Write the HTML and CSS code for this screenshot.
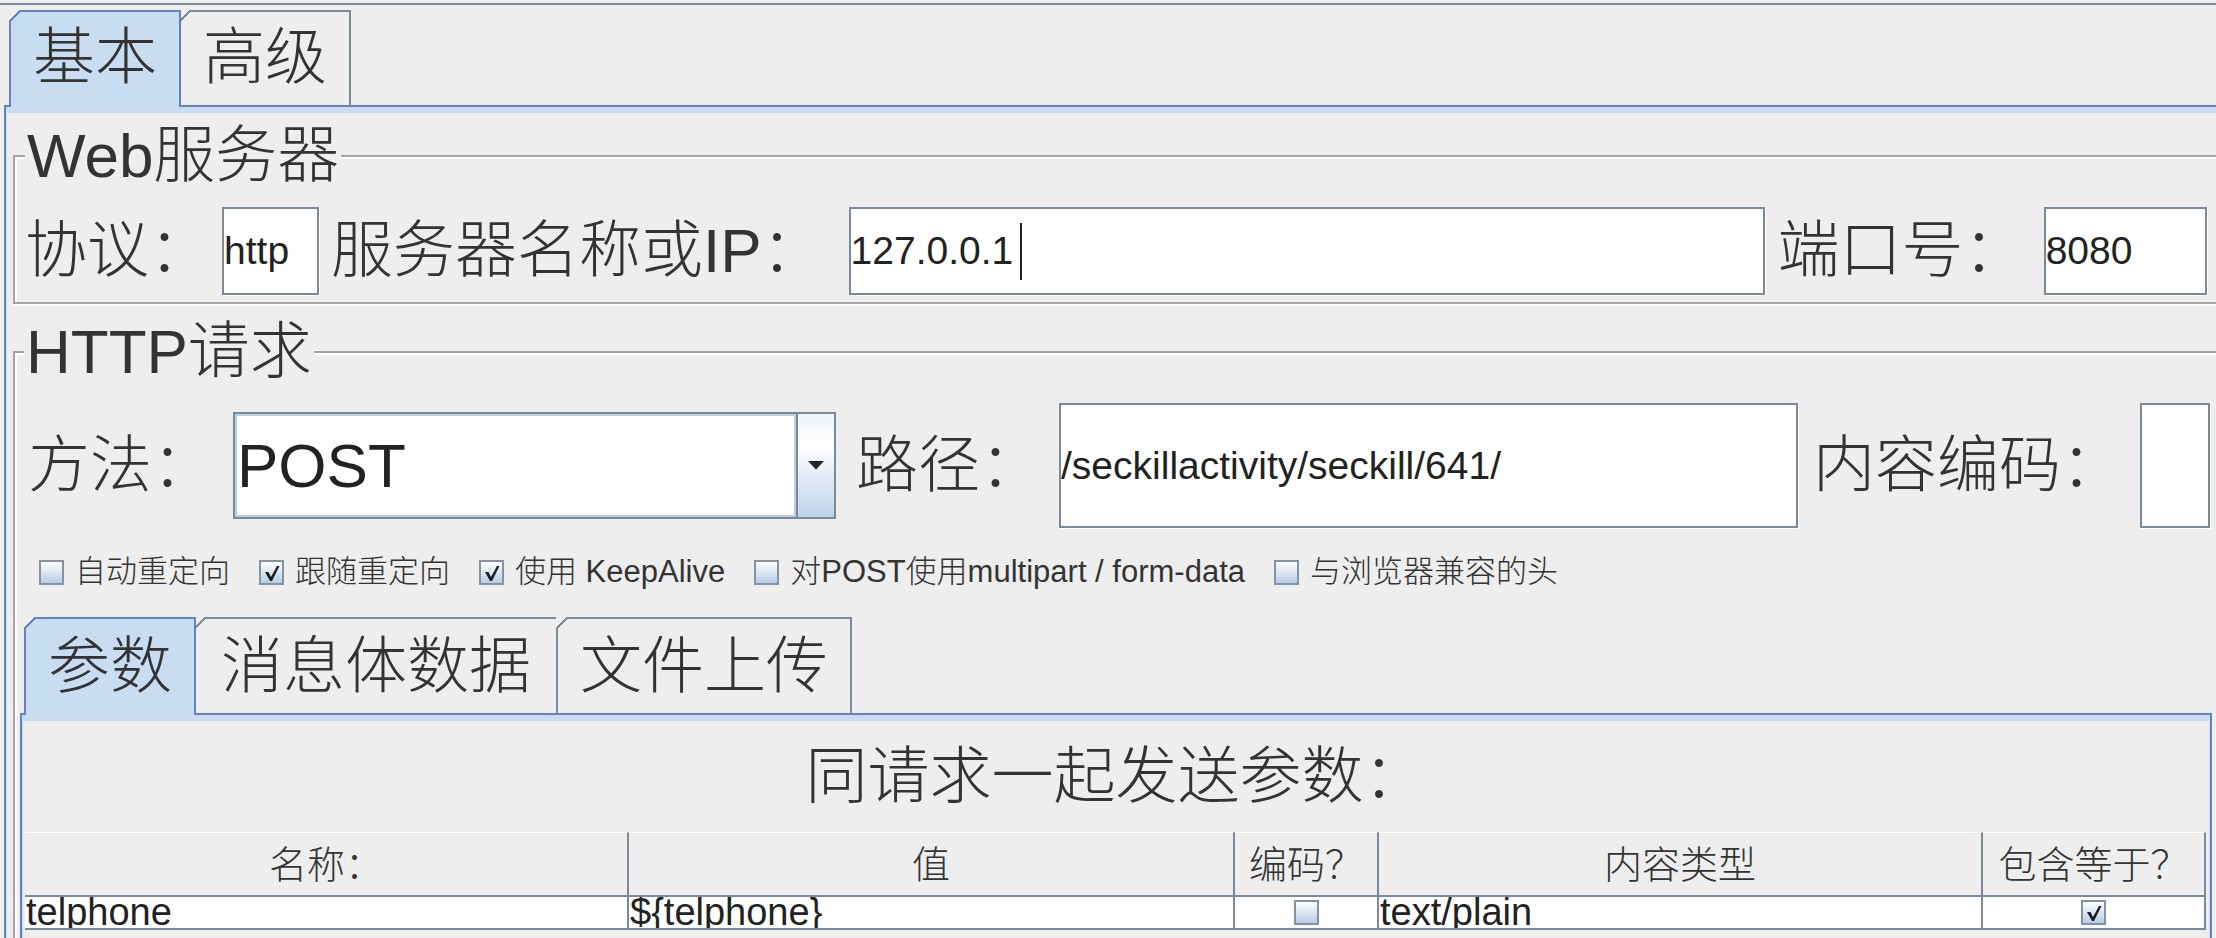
FILE: index.html
```html
<!DOCTYPE html>
<html lang="zh-CN">
<head>
<meta charset="utf-8">
<title>HTTP请求</title>
<link rel="stylesheet" href="styles.css">
</head>
<body>
<div class="topline"></div>
<div class="tabs outer-tabs">
  <div class="tab selected">基本</div>
  <div class="tab">高级</div>
</div>
<div class="panel">
  <fieldset class="group web">
    <legend>Web服务器</legend>
    <div class="row row-web">
      <span class="label">协议：</span>
      <div class="field f-protocol">http</div>
      <span class="label lbl-host">服务器名称或IP：</span>
      <div class="field f-host">127.0.0.1<span class="caret"></span></div>
      <span class="label lbl-port">端口号：</span>
      <div class="field f-port">8080</div>
    </div>
  </fieldset>
  <fieldset class="group http">
    <legend>HTTP请求</legend>
    <div class="row row-method">
      <span class="label">方法：</span>
      <div class="combo">
        <div class="combo-value">POST</div>
        <div class="combo-btn"><svg width="16" height="9" viewBox="0 0 16 9"><path d="M0 0H16L8 8.5Z" fill="#222"/></svg></div>
      </div>
      <span class="label lbl-path">路径：</span>
      <div class="field f-path">/seckillactivity/seckill/641/</div>
      <span class="label lbl-enc">内容编码：</span>
      <div class="field f-enc"></div>
    </div>
    <div class="checks">
      <div class="check"><span class="box"></span>自动重定向</div>
      <div class="check"><span class="box"><svg viewBox="0 0 21 21"><path d="M4 10H7.5L10 15L16 4H18.5L11 19H9Z" fill="#1e1e1e"/></svg></span>跟随重定向</div>
      <div class="check"><span class="box"><svg viewBox="0 0 21 21"><path d="M4 10H7.5L10 15L16 4H18.5L11 19H9Z" fill="#1e1e1e"/></svg></span>使用 KeepAlive</div>
      <div class="check"><span class="box"></span>对POST使用multipart / form-data</div>
      <div class="check"><span class="box"></span>与浏览器兼容的头</div>
    </div>
    <div class="tabs subtabs">
      <div class="tab selected">参数</div>
      <div class="tab tab-wide">消息体数据</div>
      <div class="tab">文件上传</div>
    </div>
    <div class="subpanel">
      <div class="caption">同请求一起发送参数：</div>
      <div class="params">
        <div class="th">名称：</div>
        <div class="th">值</div>
        <div class="th">编码？</div>
        <div class="th">内容类型</div>
        <div class="th">包含等于？</div>
        <div class="td">telphone</div>
        <div class="td">${telphone}</div>
        <div class="td center"><span class="box"></span></div>
        <div class="td">text/plain</div>
        <div class="td center"><span class="box"><svg viewBox="0 0 21 21"><path d="M4 10H7.5L10 15L16 4H18.5L11 19H9Z" fill="#1e1e1e"/></svg></span></div>
      </div>
    </div>
  </fieldset>
</div>
</body>
</html>
```
FILE: styles.css
```css
html, body {
  margin: 0;
  padding: 0;
  overflow: hidden;
  background: #eeeeee;
}
body {
  width: 2216px;
  height: 938px;
  font-family: "Liberation Sans", "Noto Sans CJK SC", sans-serif;
  font-weight: 300;
  color: #333333;
}

.topline {
  height: 2px;
  margin-top: 3px;
  background: #7a8a99;
}

/* ---------- tabs ---------- */
.tabs {
  display: flex;
  align-items: flex-end;
}
.outer-tabs {
  margin-top: 5px;
  padding-left: 9px;
  height: 95px;
}
.tab {
  --bc: #7a8a99;
  position: relative;
  box-sizing: border-box;
  height: 95px;
  padding: 2px 22px 3px;
  line-height: 88px;
  font-size: 62px;
  border: 2px solid var(--bc);
  border-bottom: none;
  background: #eeeeee;
  margin-left: -2px;
  white-space: nowrap;
}
.tab:first-child {
  margin-left: 0;
}
.tab::before {
  content: "";
  position: absolute;
  left: -2px;
  top: -2px;
  width: 12px;
  height: 12px;
  background: linear-gradient(135deg, #eeeeee 0, #eeeeee calc(50% - 1.1px), var(--bc) calc(50% - 1.1px), var(--bc) calc(50% + 1.1px), transparent calc(50% + 1.1px));
}
.tab.selected {
  --bc: #6382bf;
  background: #c8ddf2;
  z-index: 1;
  height: 97px;
  margin-bottom: -2px;
  padding-bottom: 5px;
}

.panel {
  margin-left: 4px;
  border-top: 2px solid #6382bf;
  border-left: 2px solid #6382bf;
  box-shadow: inset 1px 6px 0 #c8ddf2;
  padding: 19px 0 0 7px;
  height: 900px;
}

/* ---------- titled groups ---------- */
.group {
  margin: 0;
  min-inline-size: 0;
  box-sizing: border-box;
  width: 2210px;
  border: 2px solid #a5a5a5;
  box-shadow: inset 2px 2px 0 #ffffff, 0 2px 0 #ffffff;
}
.group legend {
  padding: 0 2px;
  font-size: 62px;
  line-height: 60px;
  background: #eeeeee;
  white-space: nowrap;
}
.web {
  padding: 21px 0 7px 10px;
}
.http {
  margin-top: 18px;
  padding: 21px 9px 0 5px;
}
.http legend {
  margin-left: 4px;
}

/* ---------- form rows ---------- */
.row {
  display: flex;
  align-items: center;
}
.row-web {
  height: 88px;
}
.row-method {
  height: 125px;
  padding-left: 8px;
}
.label {
  flex: none;
  font-size: 62px;
  line-height: 62px;
  white-space: nowrap;
}
.field {
  flex: none;
  box-sizing: border-box;
  display: flex;
  align-items: center;
  background: #ffffff;
  border: 2px solid #7a8a99;
  box-shadow: 1px 1px 0 #ffffff;
  font-size: 39px;
  font-weight: 400;
  color: #222222;
  white-space: nowrap;
  overflow: hidden;
}
.f-protocol { width: 97px; height: 88px; margin-left: 11px; }
.lbl-host { margin-left: 12px; }
.f-host { width: 916px; height: 88px; margin-left: 25px; }
.lbl-port { margin-left: 13px; }
.f-port { width: 163px; height: 88px; margin-left: 18px; }
.lbl-path { margin-left: 20px; }
.f-path { width: 739px; height: 125px; margin-left: 17px; }
.lbl-enc { margin-left: 15px; }
.f-enc { width: 70px; height: 125px; margin-left: 17px; }

.caret {
  flex: none;
  width: 2px;
  height: 57px;
  margin-left: 7px;
  background: #222222;
}

.combo {
  flex: none;
  display: flex;
  box-sizing: border-box;
  width: 603px;
  height: 107px;
  margin-left: 19px;
  border: 2px solid #7a8a99;
}
.combo-value {
  flex: 1;
  background: #ffffff;
  border: 2px solid #b9d0e8;
  font-size: 62px;
  font-weight: 400;
  line-height: 99px;
  color: #222222;
}
.combo-btn {
  flex: none;
  box-sizing: border-box;
  width: 38px;
  border-left: 2px solid #7a8a99;
  background: linear-gradient(#eef4fa, #ffffff 30%, #bfd4ea);
  display: flex;
  align-items: center;
  justify-content: center;
}
.combo-btn svg {
  display: block;
}

/* ---------- checkboxes ---------- */
.checks {
  display: flex;
  align-items: center;
  height: 36px;
  margin-top: 26px;
  padding-left: 19px;
  font-size: 31px;
  line-height: 36px;
}
.check {
  display: flex;
  align-items: center;
  gap: 11px;
  white-space: nowrap;
}
.check + .check {
  margin-left: 29px;
}
.box {
  flex: none;
  box-sizing: border-box;
  width: 25px;
  height: 25px;
  border: 2px solid #8393a3;
  background: linear-gradient(#ffffff, #b7cde6);
  display: flex;
  align-items: center;
  justify-content: center;
}
.box svg {
  display: block;
  width: 21px;
  height: 21px;
}

/* ---------- inner tabbed pane ---------- */
.subtabs {
  margin-top: 27px;
  padding-left: 4px;
  height: 96px;
}
.subtabs .tab {
  height: 96px;
  padding: 4px 22px 2px;
}
.subtabs .tab.selected {
  height: 98px;
  padding-bottom: 4px;
}
.subtabs .tab-wide {
  padding-left: 25px;
  padding-right: 25px;
}
.subpanel {
  box-sizing: border-box;
  width: 2192px;
  height: 300px;
  border: 2px solid #6382bf;
  border-bottom: none;
  box-shadow: inset 1px 6px 0 #c8ddf2, inset -1px 0 0 #c8ddf2;
  padding: 31px 4px 0 3px;
}
.caption {
  font-size: 62px;
  line-height: 62px;
  text-align: center;
  white-space: nowrap;
}

.params {
  display: grid;
  grid-template-columns: 604px 606px 144px 604px 223px;
  margin-top: 24px;
}
.th {
  box-sizing: border-box;
  height: 65px;
  border-top: 1px solid #ffffff;
  border-bottom: 2px solid #7a8a99;
  border-right: 2px solid #7a8a99;
  padding-top: 2px;
  font-size: 38px;
  line-height: 60px;
  text-align: center;
  white-space: nowrap;
}
.td {
  box-sizing: border-box;
  height: 33px;
  background: #ffffff;
  border-bottom: 2px solid #7a8a99;
  border-right: 2px solid #7a8a99;
  padding-left: 1px;
  font-size: 38px;
  font-weight: 400;
  line-height: 31px;
  color: #222222;
  white-space: nowrap;
  overflow: hidden;
}
.td.center {
  display: flex;
  align-items: center;
  justify-content: center;
  padding-left: 0;
}
```
